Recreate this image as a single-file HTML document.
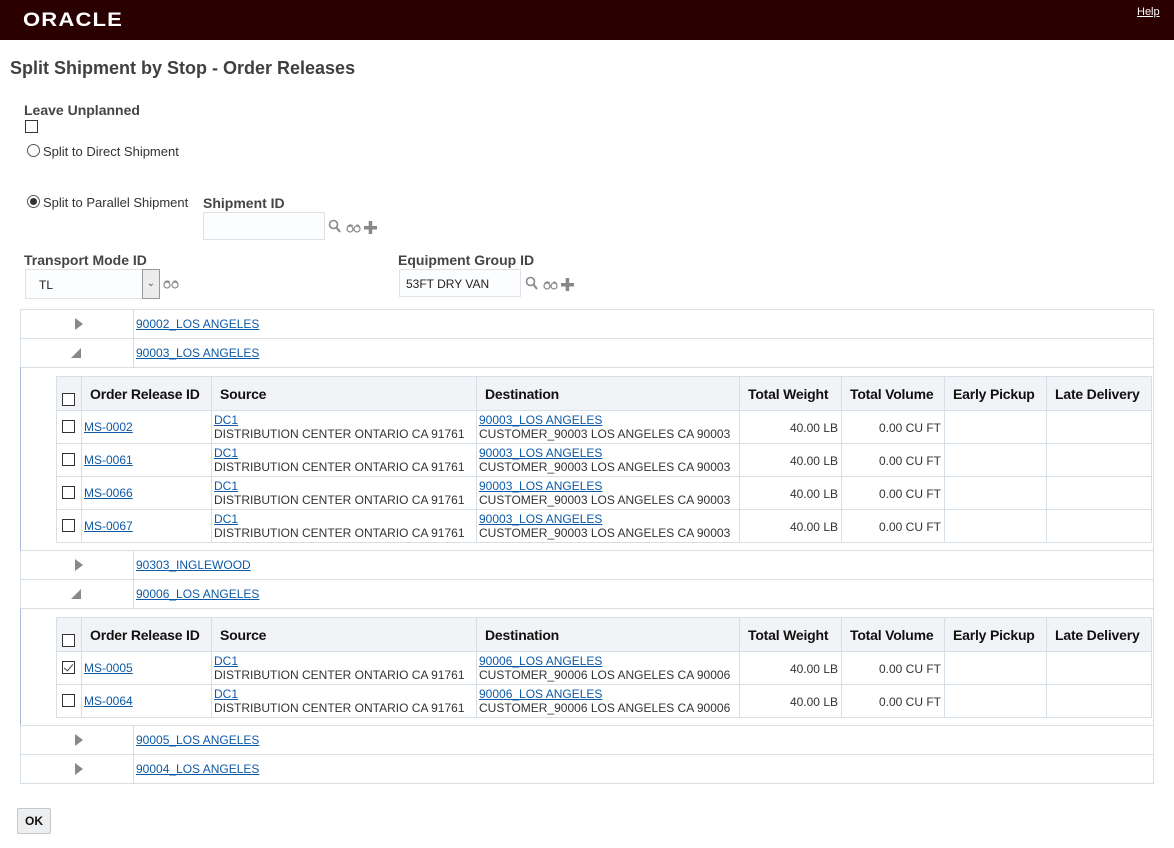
<!DOCTYPE html>
<html><head><meta charset="utf-8"><style>
*{box-sizing:border-box;margin:0;padding:0}
body{width:1174px;height:848px;background:#fff;font-family:"Liberation Sans",Arial,sans-serif;color:#333;position:relative;overflow:hidden}
.hdr{position:absolute;left:0;top:0;width:1174px;height:40px;background:#2a0000}
.logo{position:absolute;left:23px;top:10px;color:#fff;font-size:19px;font-weight:bold;letter-spacing:1px;transform:scaleX(1.16);transform-origin:left}
.help{position:absolute;left:1137px;top:6px;color:#fff;font-size:11px;text-decoration:underline}
.a{position:absolute}
.lbl{font-size:14px;font-weight:bold;color:#454545}
.t{font-size:13px;color:#333}
.cb{position:absolute;width:13px;height:13px;border:1px solid #333;background:#fff}
.rad{position:absolute;width:13px;height:13px;border:1px solid #555;border-radius:50%;background:#fff}
.inp{position:absolute;border:1px solid #dfe3e8;background:#fcfdfe;font-size:12px;color:#222}
a{color:#0e5aa7;text-decoration:underline}
.grp{position:absolute;left:20px;width:1134px;height:29px;border:1px solid #d6dfe6;border-bottom:none;font-size:12px}
.grp .sep{position:absolute;left:112px;top:0;bottom:0;border-left:1px solid #d6dfe6}
.grp a{position:absolute;left:115px;top:7px}
.tri{position:absolute;left:54px;top:8px;width:0;height:0;border-top:6px solid transparent;border-bottom:6px solid transparent;border-left:8px solid #888}
.dtri{position:absolute;left:50px;top:9px;width:0;height:0;border-left:10px solid transparent;border-bottom:10px solid #888}
.det{position:absolute;left:20px;width:1134px;border:1px solid #d6dfe6;border-left:1px solid #a8bbd8;border-bottom:none}
table{position:absolute;left:56px;border-collapse:collapse;table-layout:fixed;font-size:12px}
td,th{border:1px solid #d6dfe6;vertical-align:top}
th{background:#f1f3f6;height:34px;font-size:14px;font-weight:bold;color:#111;text-align:left;padding:0 8px;vertical-align:middle;white-space:nowrap;overflow:hidden;letter-spacing:-0.2px}
td{height:33px;padding:2px 2px;line-height:14px;color:#333;white-space:nowrap}
td.n{text-align:right;padding-top:10px;padding-right:3px}
td.c{position:relative}
td.c .cb{left:5px;top:9px}
th.c{position:relative}
th.c .cb{left:5px;top:16px}
td.id{padding-top:9px}
.ck{position:absolute;left:3px;top:0px;width:5px;height:9px;border-right:1.5px solid #444;border-bottom:1.5px solid #444;transform:rotate(40deg)}
</style></head><body>
<div class="hdr"><div class="logo">ORACLE</div><div class="help">Help</div></div>
<div class="a" style="left:10px;top:58px;font-size:18px;font-weight:bold;color:#404040">Split Shipment by Stop - Order Releases</div>
<div class="a lbl" style="left:24px;top:102px">Leave Unplanned</div>
<div class="cb" style="left:25px;top:120px"></div>
<div class="rad" style="left:27px;top:144px"></div>
<div class="a t" style="left:43px;top:144px">Split to Direct Shipment</div>
<div class="rad" style="left:27px;top:195px"><div style="position:absolute;left:2px;top:2px;width:7px;height:7px;border-radius:50%;background:#333"></div></div>
<div class="a t" style="left:43px;top:195px">Split to Parallel Shipment</div>
<div class="a lbl" style="left:203px;top:195px">Shipment ID</div>
<div class="inp" style="left:203px;top:212px;width:122px;height:28px"></div>
<svg class="a" style="left:328px;top:219px" width="50" height="16"><circle cx="5.5" cy="5.5" r="4" fill="none" stroke="#888" stroke-width="1.6"/><line x1="8.5" y1="8.5" x2="12" y2="13" stroke="#888" stroke-width="2"/><circle cx="22" cy="10" r="3" fill="none" stroke="#888" stroke-width="1.2"/><circle cx="29" cy="10" r="3" fill="none" stroke="#888" stroke-width="1.2"/><path d="M19 9 Q21 4 25 7 M28 7 Q30 4 32 9" fill="none" stroke="#888" stroke-width="1"/><rect x="36" y="7" width="13" height="3.5" fill="#888"/><rect x="40.7" y="2" width="3.5" height="13" fill="#888"/></svg>
<div class="a lbl" style="left:24px;top:252px">Transport Mode ID</div>
<div class="inp" style="left:25px;top:269px;width:135px;height:30px;padding:8px 13px">TL</div>
<div class="a" style="left:142px;top:269px;width:18px;height:30px;border:1px solid #999;background:#ececec;font-size:10px;color:#555;text-align:center;line-height:28px">&#8964;</div>
<svg class="a" style="left:163px;top:278px" width="18" height="12"><circle cx="4" cy="7" r="3" fill="none" stroke="#888" stroke-width="1.2"/><circle cx="12" cy="7" r="3" fill="none" stroke="#888" stroke-width="1.2"/><path d="M1 6 Q3 1 7 4 M10 4 Q13 1 15 6" fill="none" stroke="#888" stroke-width="1"/></svg>
<div class="a lbl" style="left:398px;top:252px">Equipment Group ID</div>
<div class="inp" style="left:399px;top:269px;width:122px;height:28px;padding:7px 6px">53FT DRY VAN</div>
<svg class="a" style="left:525px;top:276px" width="50" height="16"><circle cx="5.5" cy="5.5" r="4" fill="none" stroke="#888" stroke-width="1.6"/><line x1="8.5" y1="8.5" x2="12" y2="13" stroke="#888" stroke-width="2"/><circle cx="22" cy="10" r="3" fill="none" stroke="#888" stroke-width="1.2"/><circle cx="29" cy="10" r="3" fill="none" stroke="#888" stroke-width="1.2"/><path d="M19 9 Q21 4 25 7 M28 7 Q30 4 32 9" fill="none" stroke="#888" stroke-width="1"/><rect x="36" y="7" width="13" height="3.5" fill="#888"/><rect x="40.7" y="2" width="3.5" height="13" fill="#888"/></svg>

<div class="grp" style="top:309px"><div class="tri"></div><div class="sep"></div><a>90002_LOS ANGELES</a></div>
<div class="grp" style="top:338px"><div class="dtri"></div><div class="sep"></div><a>90003_LOS ANGELES</a></div>
<div class="det" style="top:367px;height:183px"></div>
<table style="top:376px;width:1095px">
<colgroup><col style="width:25px"><col style="width:130px"><col style="width:265px"><col style="width:263px"><col style="width:102px"><col style="width:103px"><col style="width:102px"><col style="width:105px"></colgroup>
<tr><th class="c"><div class="cb"></div></th><th>Order Release ID</th><th>Source</th><th>Destination</th><th>Total Weight</th><th>Total Volume</th><th>Early Pickup</th><th>Late Delivery</th></tr>
<tr><td class="c"><div class="cb"></div></td><td class="id"><a>MS-0002</a></td><td><a>DC1</a><br>DISTRIBUTION CENTER ONTARIO CA 91761</td><td><a>90003_LOS ANGELES</a><br>CUSTOMER_90003 LOS ANGELES CA 90003</td><td class="n">40.00 LB</td><td class="n">0.00 CU FT</td><td></td><td></td></tr>
<tr><td class="c"><div class="cb"></div></td><td class="id"><a>MS-0061</a></td><td><a>DC1</a><br>DISTRIBUTION CENTER ONTARIO CA 91761</td><td><a>90003_LOS ANGELES</a><br>CUSTOMER_90003 LOS ANGELES CA 90003</td><td class="n">40.00 LB</td><td class="n">0.00 CU FT</td><td></td><td></td></tr>
<tr><td class="c"><div class="cb"></div></td><td class="id"><a>MS-0066</a></td><td><a>DC1</a><br>DISTRIBUTION CENTER ONTARIO CA 91761</td><td><a>90003_LOS ANGELES</a><br>CUSTOMER_90003 LOS ANGELES CA 90003</td><td class="n">40.00 LB</td><td class="n">0.00 CU FT</td><td></td><td></td></tr>
<tr><td class="c"><div class="cb"></div></td><td class="id"><a>MS-0067</a></td><td><a>DC1</a><br>DISTRIBUTION CENTER ONTARIO CA 91761</td><td><a>90003_LOS ANGELES</a><br>CUSTOMER_90003 LOS ANGELES CA 90003</td><td class="n">40.00 LB</td><td class="n">0.00 CU FT</td><td></td><td></td></tr>
</table>
<div class="grp" style="top:550px"><div class="tri"></div><div class="sep"></div><a>90303_INGLEWOOD</a></div>
<div class="grp" style="top:579px"><div class="dtri"></div><div class="sep"></div><a>90006_LOS ANGELES</a></div>
<div class="det" style="top:608px;height:117px"></div>
<table style="top:617px;width:1095px">
<colgroup><col style="width:25px"><col style="width:130px"><col style="width:265px"><col style="width:263px"><col style="width:102px"><col style="width:103px"><col style="width:102px"><col style="width:105px"></colgroup>
<tr><th class="c"><div class="cb"></div></th><th>Order Release ID</th><th>Source</th><th>Destination</th><th>Total Weight</th><th>Total Volume</th><th>Early Pickup</th><th>Late Delivery</th></tr>
<tr><td class="c"><div class="cb"><div class="ck"></div></div></td><td class="id"><a>MS-0005</a></td><td><a>DC1</a><br>DISTRIBUTION CENTER ONTARIO CA 91761</td><td><a>90006_LOS ANGELES</a><br>CUSTOMER_90006 LOS ANGELES CA 90006</td><td class="n">40.00 LB</td><td class="n">0.00 CU FT</td><td></td><td></td></tr>
<tr><td class="c"><div class="cb"></div></td><td class="id"><a>MS-0064</a></td><td><a>DC1</a><br>DISTRIBUTION CENTER ONTARIO CA 91761</td><td><a>90006_LOS ANGELES</a><br>CUSTOMER_90006 LOS ANGELES CA 90006</td><td class="n">40.00 LB</td><td class="n">0.00 CU FT</td><td></td><td></td></tr>
</table>
<div class="grp" style="top:725px"><div class="tri"></div><div class="sep"></div><a>90005_LOS ANGELES</a></div>
<div class="grp" style="top:754px;border-bottom:1px solid #d6dfe6;height:30px"><div class="tri"></div><div class="sep"></div><a>90004_LOS ANGELES</a></div>
<div class="a" style="left:17px;top:808px;width:34px;height:26px;border:1px solid #c4c8cc;border-radius:2px;background:#eceef0;font-size:12px;font-weight:bold;color:#111;text-align:center;line-height:24px">OK</div>
</body></html>
